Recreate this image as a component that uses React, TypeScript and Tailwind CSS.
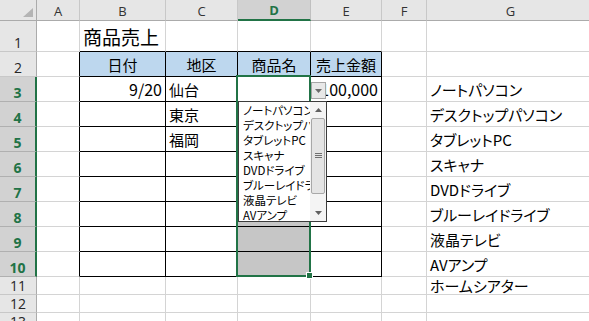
import React from "react";

const COLS = ["A", "B", "C", "D", "E", "F", "G"];
const ROWS = [1, 2, 3, 4, 5, 6, 7, 8, 9, 10, 11, 12, 13];

const gText: Record<number, string> = {
  3: "ノートパソコン",
  4: "デスクトップパソコン",
  5: "タブレットPC",
  6: "スキャナ",
  7: "DVDドライブ",
  8: "ブルーレイドライブ",
  9: "液晶テレビ",
  10: "AVアンプ",
  11: "ホームシアター",
};

const listItems = [
  "ノートパソコン",
  "デスクトップパソコン",
  "タブレットPC",
  "スキャナ",
  "DVDドライブ",
  "ブルーレイドライブ",
  "液晶テレビ",
  "AVアンプ",
];

function cellContent(r: number, c: number): { text: string; align: "l" | "r" | "c"; num?: boolean } | null {
  if (r === 2 && c >= 1 && c <= 4) return { text: ["", "日付", "地区", "商品名", "売上金額"][c], align: "c" };
  if (r === 3 && c === 1) return { text: "9/20", align: "r", num: true };
  if (r === 3 && c === 2) return { text: "仙台", align: "l" };
  if (r === 3 && c === 4) return { text: "100,000", align: "r", num: true };
  if (r === 4 && c === 2) return { text: "東京", align: "l" };
  if (r === 5 && c === 2) return { text: "福岡", align: "l" };
  if (c === 6 && gText[r]) return { text: gText[r], align: "l" };
  return null;
}

function Cell({ r, c }: { r: number; c: number }) {
  const rightBlack = r >= 2 && r <= 10 && c <= 4;
  const bottomBlack = r >= 1 && r <= 10 && c >= 1 && c <= 4;
  const rb = rightBlack ? "border-r-black" : "border-r-[#d4d4d4]";
  const bb = bottomBlack ? "border-b-black" : "border-b-[#d4d4d4]";
  let bg = "bg-white";
  if (r === 2 && c >= 1 && c <= 4) bg = "bg-[#bdd7ee]";
  else if (c === 3 && r >= 4 && r <= 10) bg = "bg-[#c6c6c6]";

  if (r === 1 && c === 1) {
    return (
      <div className={`relative border-r border-b ${rb} ${bb} ${bg} flex items-center pl-[3px] overflow-visible`}>
        <span className="whitespace-nowrap text-[19px] leading-none text-black">商品売上</span>
      </div>
    );
  }

  const content = cellContent(r, c);
  const just =
    content?.align === "r" ? "justify-end pr-[3px]" : content?.align === "c" ? "justify-center" : "justify-start pl-[3px]";
  return (
    <div className={`border-r border-b ${rb} ${bb} ${bg} flex items-center ${just} overflow-hidden`}>
      {content && (
        <span
          className={
            content.num
              ? "whitespace-nowrap text-[16px] leading-none text-black"
              : "whitespace-nowrap text-[15px] leading-none text-black [font-feature-settings:'palt']"
          }
        >
          {content.text}
        </span>
      )}
    </div>
  );
}

function ColHeader({ c }: { c: number }) {
  const sel = c === 3;
  return (
    <div
      className={
        sel
          ? "bg-[#d2d2d2] border-r border-r-[#c0c0c0] border-b-2 border-b-[#217346] flex items-end justify-center pb-[2px]"
          : "bg-[#e6e6e6] border-r border-r-[#c8c8c8] border-b border-b-[#ababab] flex items-end justify-center pb-[2px]"
      }
    >
      <span
        className={
          sel
            ? "text-[13px] leading-none font-bold text-[#217346] font-['Open_Sans',sans-serif]"
            : "text-[13px] leading-none text-[#333333] font-['Open_Sans',sans-serif]"
        }
      >
        {COLS[c]}
      </span>
    </div>
  );
}

function RowHeader({ r }: { r: number }) {
  const sel = r >= 3 && r <= 10;
  return (
    <div
      className={
        sel
          ? "bg-[#d2d2d2] border-r-2 border-r-[#217346] border-b border-b-[#b0b0b0] flex items-end justify-center pb-[1px]"
          : "bg-[#e6e6e6] border-r border-r-[#ababab] border-b border-b-[#c8c8c8] flex items-end justify-center pb-[1px]"
      }
    >
      <span
        className={
          sel
            ? "text-[14px] leading-none font-bold text-[#217346] font-['Open_Sans',sans-serif]"
            : "text-[14px] leading-none text-[#262626] font-['Open_Sans',sans-serif]"
        }
      >
        {r}
      </span>
    </div>
  );
}

export default function App() {
  return (
    <div className="relative w-[589px] h-[321px] overflow-hidden bg-white font-['Noto_Sans_CJK_JP',sans-serif]">
      <div className="grid grid-cols-[37px_43px_86px_72px_73px_71px_45px_168px] grid-rows-[21px_31px_25px_25px_25px_25px_25px_25px_25px_25px_25px_18px_18px_18px]">
        <div className="relative bg-[#e6e6e6] border-r border-r-[#ababab] border-b border-b-[#ababab]">
          <svg className="absolute right-[3px] bottom-[3px]" width="10" height="9" viewBox="0 0 10 9">
            <polygon points="10,0 10,9 0,9" fill="#b4b4b4" />
          </svg>
        </div>
        {COLS.map((_, c) => (
          <ColHeader key={`h${c}`} c={c} />
        ))}
        {ROWS.map((r) => (
          <React.Fragment key={r}>
            <RowHeader r={r} />
            {COLS.map((_, c) => (
              <Cell key={`${r}-${c}`} r={r} c={c} />
            ))}
          </React.Fragment>
        ))}
      </div>

      {/* selection border */}
      <div className="absolute left-[236px] top-[75px] w-[75px] h-[202px] border-2 border-[#217346]" />
      {/* fill handle */}
      <div className="absolute left-[306px] top-[272px] w-[7px] h-[7px] bg-[#217346] border border-white" />

      {/* dropdown button */}
      <div className="absolute left-[311px] top-[82px] w-[15px] h-[17px] border border-[#a6a6a6] bg-[#e8e8e8] flex items-center justify-center">
        <svg width="7" height="4" viewBox="0 0 7 4">
          <polygon points="0,0 7,0 3.5,4" fill="#6b6b6b" />
        </svg>
      </div>

      {/* dropdown list */}
      <div className="absolute left-[238px] top-[101px] w-[89px] h-[121px] border border-[#3c3c3c] bg-white flex">
        <div className="flex-1 overflow-hidden pl-[4px] pt-[1px]">
          {listItems.map((t) => (
            <div
              key={t}
              className="h-[15px] leading-[15px] text-[11.5px] text-black whitespace-nowrap [font-feature-settings:'palt']"
            >
              {t}
            </div>
          ))}
        </div>
        <div className="w-[16px] bg-[#f4f4f4] flex flex-col items-center">
          <div className="h-[16px] w-full flex items-center justify-center">
            <svg width="7" height="4" viewBox="0 0 7 4">
              <polygon points="3.5,0 7,4 0,4" fill="#606060" />
            </svg>
          </div>
          <div className="h-[76px] w-[14px] rounded-[2px] border border-[#a8a8a8] bg-[#e4e4e4] flex items-center justify-center">
            <svg width="7" height="6" viewBox="0 0 7 6">
              <line x1="0" y1="0.5" x2="7" y2="0.5" stroke="#707070" strokeWidth="1" />
              <line x1="0" y1="2.5" x2="7" y2="2.5" stroke="#707070" strokeWidth="1" />
              <line x1="0" y1="4.5" x2="7" y2="4.5" stroke="#707070" strokeWidth="1" />
            </svg>
          </div>
          <div className="flex-1" />
          <div className="h-[16px] w-full flex items-center justify-center">
            <svg width="7" height="4" viewBox="0 0 7 4">
              <polygon points="0,0 7,0 3.5,4" fill="#606060" />
            </svg>
          </div>
        </div>
      </div>
    </div>
  );
}
